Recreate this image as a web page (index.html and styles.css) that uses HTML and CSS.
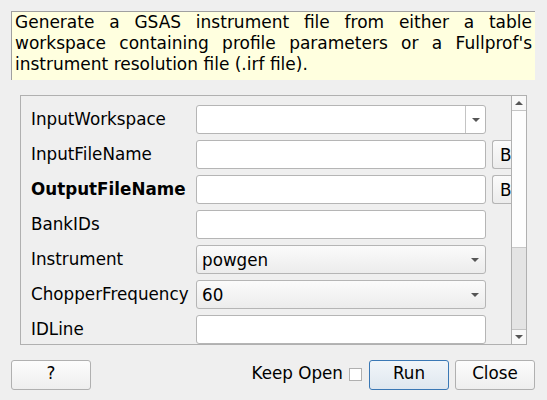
FILE: index.html
```html
<!DOCTYPE html>
<html>
<head>
<meta charset="utf-8">
<link rel="stylesheet" href="styles.css">
</head>
<body>
<div class="dialog">
  <div class="desc">
    <div class="jl">Generate a GSAS instrument file from either a table</div>
    <div class="jl">workspace containing profile parameters or a Fullprof's</div>
    <div>instrument resolution file (.irf file).</div>
  </div>
  <div class="scrollarea">
    <div class="viewport">
      <div class="form">
        <div class="lbl">InputWorkspace</div>
        <div class="combo edit"><span class="ctext"></span><span class="arrowbox"><span class="tri"></span></span></div>
        <div></div>

        <div class="lbl">InputFileName</div>
        <div class="field"></div>
        <div class="browse">B</div>

        <div class="lbl bold">OutputFileName</div>
        <div class="field"></div>
        <div class="browse">B</div>

        <div class="lbl">BankIDs</div>
        <div class="field"></div>
        <div></div>

        <div class="lbl">Instrument</div>
        <div class="combo"><span class="ctext">powgen</span><span class="arrowplain"><span class="tri"></span></span></div>
        <div></div>

        <div class="lbl">ChopperFrequency</div>
        <div class="combo"><span class="ctext">60</span><span class="arrowplain"><span class="tri"></span></span></div>
        <div></div>

        <div class="lbl">IDLine</div>
        <div class="field"></div>
        <div></div>
      </div>
    </div>
    <div class="vscroll">
      <div class="sbtn"><span class="tri up"></span></div>
      <div class="track">
        <div class="handle"></div>
        <div class="rest"></div>
      </div>
      <div class="sbtn bottom"><span class="tri"></span></div>
    </div>
  </div>
  <div class="bar">
    <div class="btn">?</div>
    <div class="spacer"></div>
    <div class="keep">Keep Open</div>
    <div class="check"></div>
    <div class="btn default">Run</div>
    <div class="btn">Close</div>
  </div>
</div>
</body>
</html>
```

FILE: styles.css
```css
html, body {
  margin: 0;
  padding: 0;
  background: #efefef;
  font-family: "DejaVu Sans", sans-serif;
  font-size: 16.75px;
  color: #000;
}
.dialog {
  width: 547px;
  height: 400px;
  box-sizing: border-box;
  padding: 11px 12px 0 11px;
  display: flex;
  flex-direction: column;
}
.desc {
  height: 69px;
  box-sizing: border-box;
  background: #ffffdf;
  border-top: 1px solid #a0a0a0;
  border-left: 1px solid #a0a0a0;
  padding: 0 3px 0 3px;
  line-height: 21px;
  font-size: 17px;
}
.jl {
  text-align: justify;
  text-align-last: justify;
}
.scrollarea {
  margin: 15px 8px 0 9px;
  height: 250px;
  box-sizing: border-box;
  border: 1px solid #b0b0b0;
  display: flex;
}
.viewport {
  flex: 1;
  overflow: hidden;
}
.form {
  display: grid;
  grid-template-columns: 159px 290px 20px;
  column-gap: 6px;
  row-gap: 6px;
  padding: 9px 0 0 10px;
  grid-auto-rows: 29px;
}
.lbl {
  display: flex;
  align-items: center;
  white-space: nowrap;
  padding-bottom: 2px;
}
.bold { font-weight: bold; }
.field, .combo, .browse {
  box-sizing: border-box;
  border: 1px solid #b5b5b5;
  border-radius: 3px;
  background: #fff;
}
.combo {
  display: flex;
  align-items: center;
}
.combo:not(.edit) {
  background: linear-gradient(#fbfbfb, #ececec);
}
.ctext {
  flex: 1;
  padding-left: 5px;
}
.arrowbox {
  width: 19px;
  align-self: stretch;
  border-left: 1px solid #c4c4c4;
  display: flex;
  align-items: center;
  justify-content: center;
}
.arrowplain {
  width: 20px;
  display: flex;
  align-items: center;
  justify-content: center;
}
.tri {
  width: 0;
  height: 0;
  border-left: 4px solid transparent;
  border-right: 4px solid transparent;
  border-top: 4px solid #555;
}
.tri.up {
  border-top: 0;
  border-bottom: 4px solid #555;
}
.browse {
  background: linear-gradient(#fbfbfb, #ececec);
  border-right: 0;
  border-radius: 3px 0 0 3px;
  display: flex;
  align-items: center;
  padding-left: 7px;
}
.vscroll {
  width: 14px;
  border-left: 1px solid #b0b0b0;
  display: flex;
  flex-direction: column;
  background: #f6f6f6;
}
.sbtn {
  height: 14px;
  display: flex;
  align-items: center;
  justify-content: center;
  border-bottom: 1px solid #c4c4c4;
  background: #f8f8f8;
}
.sbtn.bottom {
  border-bottom: 0;
  border-top: 1px solid #c4c4c4;
}
.track {
  flex: 1;
  display: flex;
  flex-direction: column;
}
.handle {
  height: 136px;
  background: #fdfdfd;
  border-bottom: 1px solid #c8c8c8;
}
.rest {
  flex: 1;
  background: #e4e4e4;
}
.bar {
  margin-top: 15px;
  display: flex;
  align-items: center;
}
.btn {
  width: 80px;
  height: 30px;
  box-sizing: border-box;
  border: 1px solid #b0b0b0;
  border-radius: 3px;
  background: linear-gradient(#fcfcfc, #eeeeee);
  display: flex;
  align-items: center;
  justify-content: center;
  padding-bottom: 5px;
}
.btn.default {
  border-color: #3a78b5;
  background: linear-gradient(#f1f5f9, #dfe7ef);
  margin-right: 6px;
}
.spacer { flex: 1; }
.keep { margin-right: 6px; padding-bottom: 5px; }
.check {
  width: 13px;
  height: 13px;
  box-sizing: border-box;
  border: 1px solid #b0b0b0;
  background: #fff;
  margin-right: 7px;
  margin-bottom: 2px;
}
```
